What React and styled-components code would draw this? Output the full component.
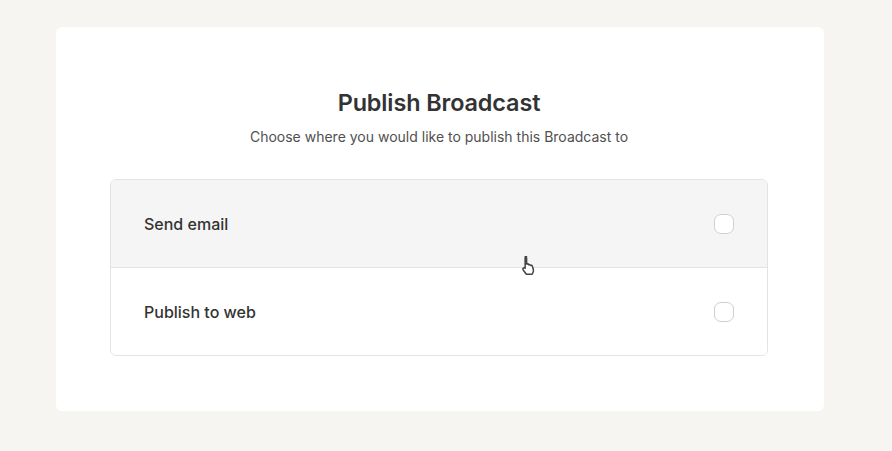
import React from "react";
import styled, { createGlobalStyle } from "styled-components";

const Global = createGlobalStyle`
  html, body { margin: 0; padding: 0; background: #f6f5f2; }
  body { font-family: Inter, "Noto Sans", sans-serif; }
`;

const Page = styled.div`
  width: 892px;
  height: 451px;
  box-sizing: border-box;
  padding: 27px 68px 40px 56px;
  background: #f6f5f2;
`;

const Card = styled.div`
  position: relative;
  height: 384px;
  background: #ffffff;
  border-radius: 6px;
  box-sizing: border-box;
  padding: 62px 57px 0 55px;
  display: flex;
  flex-direction: column;
  align-items: center;
`;

const Title = styled.h1`
  margin: 0;
  font-size: 23.4px;
  font-weight: 600;
  color: #333333;
  letter-spacing: -0.1px;
  line-height: 28px;
`;

const Subtitle = styled.p`
  margin: 11px 0 0;
  font-size: 14px;
  color: #505050;
  line-height: 18px;
`;

const Options = styled.div`
  margin-top: 33px;
  width: 100%;
  border: 1px solid #e3e3e3;
  border-radius: 6px;
  overflow: hidden;
  display: flex;
  flex-direction: column;
`;

const Option = styled.div`
  height: 87px;
  display: flex;
  align-items: center;
  justify-content: space-between;
  padding: 0 33px;
  background: ${(p) => (p.$hover ? "#f5f5f5" : "#ffffff")};
  border-top: ${(p) => (p.$first ? "none" : "1px solid #e3e3e3")};
`;

const Label = styled.span`
  font-size: 16px;
  font-weight: 500;
  color: #333333;
`;

const Check = styled.span`
  width: 18px;
  height: 18px;
  border: 1.5px solid #cfcfcf;
  border-radius: 7px;
  background: #fff;
`;

const Cursor = styled.svg`
  position: absolute;
  left: 464px;
  top: 228px;
`;

export default function App() {
  return (
    <>
      <Global />
      <Page>
        <Card>
          <Title>Publish Broadcast</Title>
          <Subtitle>Choose where you would like to publish this Broadcast to</Subtitle>
          <Options>
            <Option $first $hover>
              <Label>Send email</Label>
              <Check />
            </Option>
            <Option>
              <Label>Publish to web</Label>
              <Check />
            </Option>
          </Options>
          <Cursor width="18" height="22" viewBox="0 0 16 20">
            <path
              d="M4.5 1.5c.8 0 1.3.6 1.3 1.3v5.4l.4-.1c.7-.1 1.3.2 1.5.8.6-.3 1.3-.1 1.6.5.6-.3 1.4 0 1.6.7l.9 2.5c.5 1.4.3 2.9-.5 4.1l-.6.8H5.6l-2.9-3.9c-.4-.6-.3-1.4.3-1.8.5-.3 1.1-.2 1.5.2V2.8c0-.7.6-1.3 1.3-1.3z"
              fill="#ffffff"
              stroke="#444"
              strokeWidth="1.4"
              strokeLinejoin="round"
            />
          </Cursor>
        </Card>
      </Page>
    </>
  );
}
